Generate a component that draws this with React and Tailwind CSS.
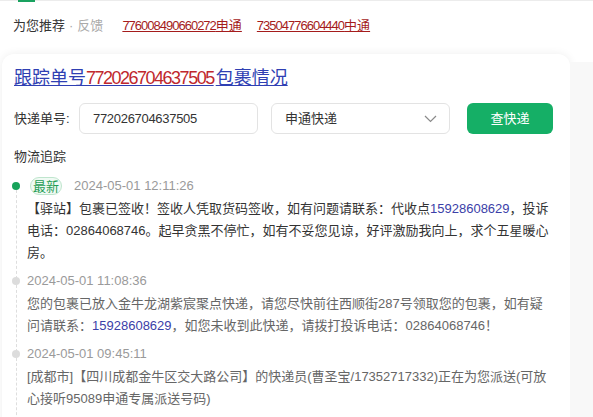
import React from "react";

const font = { fontFamily: '"Liberation Sans", "Noto Sans CJK SC", sans-serif' };

function Chevron() {
  return (
    <svg width="13" height="8" viewBox="0 0 13 8" fill="none">
      <path d="M1 1l5.5 5.5L12 1" stroke="#8a8a8a" strokeWidth="1.2" />
    </svg>
  );
}

function Item({ active, time, children, last }) {
  return (
    <div className="relative pl-[13px] pb-[5px]">
      {!last && (
        <div className="absolute left-[2px] top-[16px] bottom-[-10px] border-l border-dashed border-[#dedede]" />
      )}
      <div
        className={
          "absolute left-[-2px] top-[8px] w-[8px] h-[8px] rounded-full " +
          (active ? "bg-[#17a35a]" : "bg-[#dcdcdc]")
        }
      />
      <div className="flex items-center h-[24px]">
        {active && (
          <span className="ml-[3px] mr-[12px] h-[18px] px-[2px] flex items-center rounded-full border border-[#bfe5cd] bg-[#f0faf4] text-[#1f9d55] text-[13px] leading-none">
            最新
          </span>
        )}
        <span className="text-[13px] text-[#9a9a9a]">{time}</span>
      </div>
      <div className={"text-[13px] leading-[22px] " + (active ? "text-[#333]" : "text-[#666]")}>
        {children}
      </div>
    </div>
  );
}

const Phone = ({ children }) => <span className="text-[#3b40a8]">{children}</span>;

export default function App() {
  return (
    <div className="w-[593px] h-[417px] overflow-hidden bg-white" style={font}>
      <div className="relative h-px bg-[#ececec]">
        <div className="absolute left-[18px] top-0 w-[17px] h-[2px] bg-[#1aa260]" />
      </div>
      <div className="flex items-center h-[50px] pl-[13px] text-[13px]">
        <span className="text-[#333]">为您推荐</span>
        <span className="text-[#aaa] mx-[4px]">·</span>
        <span className="text-[#aaa]">反馈</span>
        <a className="ml-[19px] text-[#a51c1c] underline">
          <span className="tracking-[-1px]">776008490660272</span>申通
        </a>
        <a className="ml-[15px] text-[#a51c1c] underline">
          <span className="tracking-[-1px]">73504776604440</span>中通
        </a>
      </div>
      <div className="flex mt-[3px]">
        <div className="ml-[2px] w-[568px] h-[400px] rounded-[12px] bg-white shadow-[0_0_10px_rgba(0,0,0,0.07)] pl-[12px] pr-[16px] pt-[11px]">
          <div className="text-[18px] leading-[26px] underline text-[#2f3fb3]">
            跟踪单号<span className="text-[#c0282d] tracking-[-1.5px]">772026704637505</span>
            <span className="ml-[2px]">包裹情况</span>
          </div>
          <div className="flex items-center mt-[12px] h-[31px]">
            <span className="text-[13px] text-[#333] w-[65px]">快递单号:</span>
            <div className="w-[179px] h-[31px] flex items-center pl-[13px] rounded-[6px] border border-[#e3e3e3] text-[13px] text-[#333] tracking-[-0.3px]">
              772026704637505
            </div>
            <div className="ml-[13px] w-[179px] h-[31px] flex items-center justify-between pl-[13px] pr-[12px] rounded-[6px] border border-[#e3e3e3] text-[13px] text-[#333]">
              <span>申通快递</span>
              <Chevron />
            </div>
            <div className="ml-[17px] w-[86px] h-[31px] flex items-center justify-center rounded-[6px] bg-[#15af66] text-white text-[13px]">
              查快递
            </div>
          </div>
          <div className="mt-[12px] text-[13px] leading-[22px] text-[#333]">物流追踪</div>
          <div className="mt-[6px] w-[537px]">
            <Item active time="2024-05-01 12:11:26">
              【驿站】包裹已签收！签收人凭取货码签收，如有问题请联系：代收点<Phone>15928608629</Phone>，投诉电话：02864068746。起早贪黑不停忙，如有不妥您见谅，好评激励我向上，求个五星暖心房。
            </Item>
            <Item time="2024-05-01 11:08:36">
              您的包裹已放入金牛龙湖紫宸聚点快递，请您尽快前往西顺街287号领取您的包裹，如有疑问请联系：<Phone>15928608629</Phone>，如您未收到此快递，请拨打投诉电话：02864068746！
            </Item>
            <Item time="2024-05-01 09:45:11">
              [成都市]【四川成都金牛区交大路公司】的快递员(曹圣宝/17352717332)正在为您派送(可放心接听95089申通专属派送号码)
            </Item>
          </div>
        </div>
        <div className="flex-1 mt-[8px] bg-[#f8f8f8]" />
      </div>
    </div>
  );
}
